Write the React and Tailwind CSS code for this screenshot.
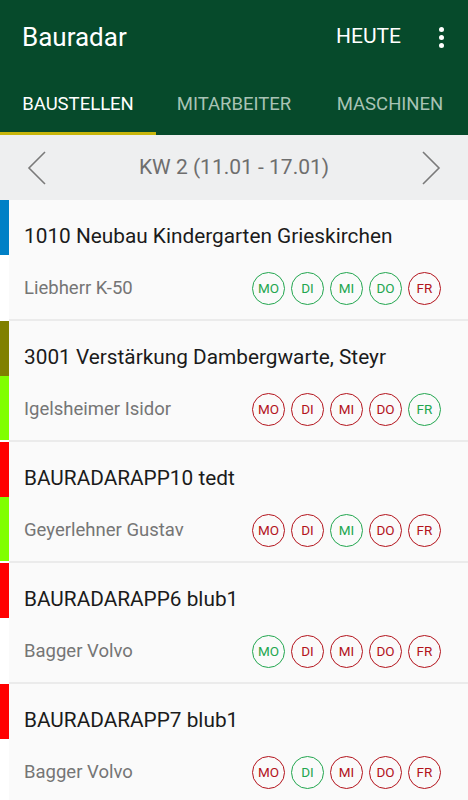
import React from "react";

const items = [
  { title: "1010 Neubau Kindergarten Grieskirchen", sub: "Liebherr K-50", top: "#0080c6", bottom: "#ffffff", days: [1, 1, 1, 1, 0] },
  { title: "3001 Verstärkung Dambergwarte, Steyr", sub: "Igelsheimer Isidor", top: "#808000", bottom: "#80ff00", days: [0, 0, 0, 0, 1] },
  { title: "BAURADARAPP10 tedt", sub: "Geyerlehner Gustav", top: "#ff0000", bottom: "#80ff00", days: [0, 0, 1, 0, 0] },
  { title: "BAURADARAPP6 blub1", sub: "Bagger Volvo", top: "#ff0000", bottom: "#ffffff", days: [1, 0, 0, 0, 0] },
  { title: "BAURADARAPP7 blub1", sub: "Bagger Volvo", top: "#ff0000", bottom: "#ffffff", days: [0, 1, 0, 0, 0] },
];

const dayNames = ["MO", "DI", "MI", "DO", "FR"];

function Day({ label, ok }) {
  return (
    <div
      className={`w-[33px] h-[33px] rounded-full border-[1.5px] flex items-center justify-center text-[13.5px] leading-none ${
        ok ? "border-[#22a64f] text-[#22a64f]" : "border-[#b3131c] text-[#b3131c]"
      }`}
    >
      {label}
    </div>
  );
}

function Row({ item }) {
  return (
    <div className="flex">
      <div className="w-[9px] flex flex-col">
        <div className="h-[55px]" style={{ backgroundColor: item.top }} />
        <div className="flex-1" style={{ backgroundColor: item.bottom }} />
        <div className="h-[2px] bg-white" />
      </div>
      <div className="flex-1 bg-[#fafafa] border-b-2 border-[#ebebeb] pl-[15px] pr-[27px] pt-[22px] pb-[14px]">
        <div className="text-[20.8px] leading-[28px] text-[#1b1b1b]">{item.title}</div>
        <div className="mt-[22px] h-[33px] flex items-center justify-between">
          <span className="text-[18.5px] text-[#757575]">{item.sub}</span>
          <div className="flex gap-[6px]">
            {dayNames.map((d, i) => (
              <Day key={d} label={d} ok={item.days[i] === 1} />
            ))}
          </div>
        </div>
      </div>
    </div>
  );
}

export default function App() {
  return (
    <div className="w-[468px] h-[800px] overflow-hidden bg-white" style={{ fontFamily: "Roboto, 'Noto Sans', sans-serif" }}>
      <div className="bg-[#064a2b]">
        <div className="h-[74px] flex items-center pl-[22px] pr-[24px]">
          <div className="flex-1 text-white text-[26px]">Bauradar</div>
          <div className="text-white text-[21px] mr-[38px]">HEUTE</div>
          <div className="flex flex-col gap-[3px]">
            <span className="w-[5px] h-[5px] rounded-full bg-white" />
            <span className="w-[5px] h-[5px] rounded-full bg-white" />
            <span className="w-[5px] h-[5px] rounded-full bg-white" />
          </div>
        </div>
        <div className="flex h-[61px]">
          {["BAUSTELLEN", "MITARBEITER", "MASCHINEN"].map((t, i) => (
            <div key={t} className="relative w-[156px] flex items-center justify-center">
              <span className={`text-[18.5px] ${i === 0 ? "text-white" : "text-[#a8c3b5]"}`}>{t}</span>
              {i === 0 && <div className="absolute left-0 right-0 bottom-0 h-[3px] bg-[#c8b60c]" />}
            </div>
          ))}
        </div>
      </div>

      <div className="h-[65px] bg-[#eeeff0] flex items-center justify-between px-[27px]">
        <svg width="20" height="34" viewBox="0 0 20 34" fill="none" stroke="#7a7a7a" strokeWidth="1.6">
          <path d="M18 1 L2 17 L18 33" />
        </svg>
        <span className="text-[21px] text-[#6e6e6e]">KW 2 (11.01 - 17.01)</span>
        <svg width="20" height="34" viewBox="0 0 20 34" fill="none" stroke="#7a7a7a" strokeWidth="1.6">
          <path d="M2 1 L18 17 L2 33" />
        </svg>
      </div>

      <div>
        {items.map((it) => (
          <Row key={it.title} item={it} />
        ))}
      </div>
    </div>
  );
}
